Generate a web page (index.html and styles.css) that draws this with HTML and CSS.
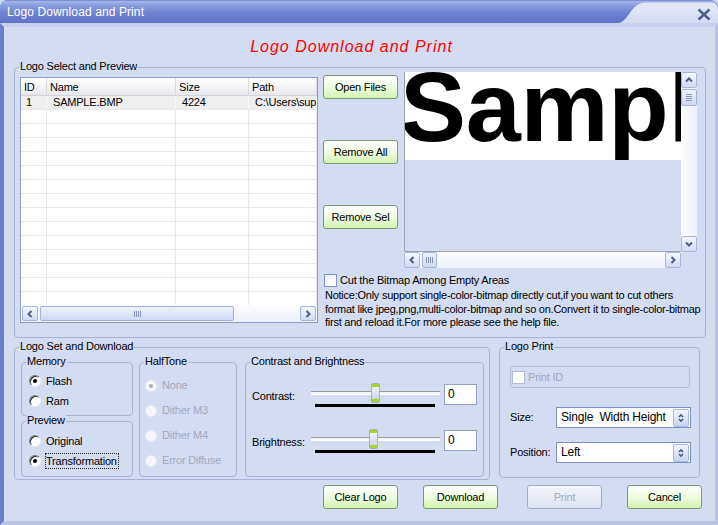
FILE: index.html
```html
<!doctype html>
<html lang="en">
<head>
    <meta charset="UTF-8">
    <title>Logo Download and Print</title>
    <link rel="stylesheet" href="styles.css">
</head>
<body>
<div class="window">
    <div class="titlebar">
        <span class="title-text">Logo Download and Print</span>
        <div class="title-cap">
            <svg class="cap-shape" viewBox="0 0 100 23" preserveAspectRatio="none">
                <defs>
                    <linearGradient id="capfill" x1="0" y1="0" x2="0" y2="1">
                        <stop offset="0" stop-color="#e6eaf9"/>
                        <stop offset="1" stop-color="#d3daf2"/>
                    </linearGradient>
                </defs>
                <path d="M0 23 C10 23 13 2.5 27 2.5 L93 2.5 Q100 2.5 100 10 L100 23 Z" fill="url(#capfill)"/>
            </svg>
            <svg class="close" viewBox="0 0 14 13"><path d="M1.5 1.5 L12.5 11.5 M12.5 1.5 L1.5 11.5"/></svg>
        </div>
    </div>

    <div class="frame">
        <h1 class="heading">Logo Download and Print</h1>

        <div class="group group-select">
            <span class="group-label">Logo Select and Preview</span>

            <div class="list">
                <div class="list-head">
                    <span>ID</span><span>Name</span><span>Size</span><span>Path</span>
                </div>
                <div class="list-body">
                    <div class="row sel"><span>1</span><span>SAMPLE.BMP</span><span>4224</span><span>C:\Users\sup</span></div>
                    <div class="row"><span></span><span></span><span></span><span></span></div>
                    <div class="row"><span></span><span></span><span></span><span></span></div>
                    <div class="row"><span></span><span></span><span></span><span></span></div>
                    <div class="row"><span></span><span></span><span></span><span></span></div>
                    <div class="row"><span></span><span></span><span></span><span></span></div>
                    <div class="row"><span></span><span></span><span></span><span></span></div>
                    <div class="row"><span></span><span></span><span></span><span></span></div>
                    <div class="row"><span></span><span></span><span></span><span></span></div>
                    <div class="row"><span></span><span></span><span></span><span></span></div>
                    <div class="row"><span></span><span></span><span></span><span></span></div>
                    <div class="row"><span></span><span></span><span></span><span></span></div>
                    <div class="row"><span></span><span></span><span></span><span></span></div>
                    <div class="row"><span></span><span></span><span></span><span></span></div>
                    <div class="row"><span></span><span></span><span></span><span></span></div>
                </div>
                <div class="hscroll list-scroll">
                    <span class="sb-btn"><svg viewBox="0 0 8 8"><path d="M5.5 1 L2.5 4 L5.5 7"/></svg></span>
                    <span class="sb-thumb list-thumb"><svg class="grip" viewBox="0 0 7 6"><path d="M0.5 0V6M2.5 0V6M4.5 0V6M6.5 0V6"/></svg></span>
                    <span class="sb-track"></span>
                    <span class="sb-btn"><svg viewBox="0 0 8 8"><path d="M2.5 1 L5.5 4 L2.5 7"/></svg></span>
                </div>
            </div>

            <div class="side-btns">
                <button class="btn">Open Files</button>
                <button class="btn">Remove All</button>
                <button class="btn">Remove Sel</button>
            </div>

            <div class="preview">
                <div class="canvas">
                    <div class="canvas-img"><span>Sampl</span></div>
                </div>
                <div class="vscroll">
                    <span class="sb-btn"><svg viewBox="0 0 8 8"><path d="M1 5.5 L4 2.5 L7 5.5"/></svg></span>
                    <span class="sb-thumb v-thumb"><svg class="grip" viewBox="0 0 6 7"><path d="M0 0.5H6M0 2.5H6M0 4.5H6M0 6.5H6"/></svg></span>
                    <span class="sb-track"></span>
                    <span class="sb-btn"><svg viewBox="0 0 8 8"><path d="M1 2.5 L4 5.5 L7 2.5"/></svg></span>
                </div>
                <div class="hscroll preview-scroll">
                    <span class="sb-btn"><svg viewBox="0 0 8 8"><path d="M5.5 1 L2.5 4 L5.5 7"/></svg></span>
                    <span class="sb-thumb small-thumb"><svg class="grip" viewBox="0 0 7 6"><path d="M0.5 0V6M2.5 0V6M4.5 0V6M6.5 0V6"/></svg></span>
                    <span class="sb-track"></span>
                    <span class="sb-btn"><svg viewBox="0 0 8 8"><path d="M2.5 1 L5.5 4 L2.5 7"/></svg></span>
                </div>
            </div>

            <div class="cut">
                <label class="check-row"><span class="checkbox"></span>Cut the Bitmap Among Empty Areas</label>
                <p class="notice">Notice:Only support single-color-bitmap directly cut,if you want to cut others<br>format like jpeg,png,multi-color-bitmap and so on.Convert it to single-color-bitmap<br>first and reload it.For more please see the help file.</p>
            </div>
        </div>

        <div class="lower">
            <div class="group group-set">
                <span class="group-label">Logo Set and Download</span>

                <div class="set-col">
                    <div class="group group-memory">
                        <span class="group-label">Memory</span>
                        <label class="opt"><span class="radio on"></span>Flash</label>
                        <label class="opt"><span class="radio"></span>Ram</label>
                    </div>
                    <div class="group group-preview">
                        <span class="group-label">Preview</span>
                        <label class="opt"><span class="radio"></span>Original</label>
                        <label class="opt"><span class="radio on"></span><span class="focus">Transformation</span></label>
                    </div>
                </div>

                <div class="group group-halftone">
                    <span class="group-label">HalfTone</span>
                    <label class="opt"><span class="radio off on"></span>None</label>
                    <label class="opt"><span class="radio off"></span>Dither M3</label>
                    <label class="opt"><span class="radio off"></span>Dither M4</label>
                    <label class="opt"><span class="radio off"></span>Error Diffuse</label>
                </div>

                <div class="group group-cb">
                    <span class="group-label">Contrast and Brightness</span>
                    <div class="cb-row">
                        <span class="cb-label">Contrast:</span>
                        <div class="slider">
                            <div class="track"></div>
                            <div class="ticks"></div>
                            <span class="thumb"></span>
                        </div>
                        <span class="num-input">0</span>
                    </div>
                    <div class="cb-row">
                        <span class="cb-label">Brightness:</span>
                        <div class="slider">
                            <div class="track"></div>
                            <div class="ticks"></div>
                            <span class="thumb thumb-b"></span>
                        </div>
                        <span class="num-input">0</span>
                    </div>
                </div>
            </div>

            <div class="group group-print">
                <span class="group-label">Logo Print</span>
                <label class="print-id"><span class="checkbox off"></span>Print ID</label>
                <div class="field field-size">
                    <span class="field-label">Size:</span>
                    <div class="select"><span class="select-text">Single  Width Height</span><span class="drop"><svg viewBox="0 0 8 10"><path d="M2 4 L4 2 L6 4 M2 6 L4 8 L6 6"/></svg></span></div>
                </div>
                <div class="field field-pos">
                    <span class="field-label">Position:</span>
                    <div class="select"><span class="select-text">Left</span><span class="drop"><svg viewBox="0 0 8 10"><path d="M2 4 L4 2 L6 4 M2 6 L4 8 L6 6"/></svg></span></div>
                </div>
            </div>
        </div>

        <div class="actions">
            <button class="btn">Clear Logo</button>
            <button class="btn btn-download">Download</button>
            <button class="btn disabled">Print</button>
            <button class="btn">Cancel</button>
        </div>
    </div>
</div>
</body>
</html>
```

FILE: styles.css
```css
* { margin: 0; padding: 0; box-sizing: border-box; }
html, body { width: 100%; height: 100%; }
body {
    font: 11px/13px "Liberation Sans", Arial, sans-serif;
    letter-spacing: -0.2px;
    color: #000;
    background: #d4dcf2;
}

/* window chrome */
.window { width: 718px; height: 525px; display: flex; flex-direction: column; background: #6b7ec8; border-radius: 8px 8px 0 0; overflow: hidden; }
.titlebar {
    height: 23px; display: flex;
    background: linear-gradient(#5668bd 0, #a6b5ea 1px, #8c9fdf 5px, #7185d2 12px, #5e72c5 23px);
}
.title-text { flex: 1; padding: 5px 0 0 7px; color: #fff; font-size: 12px; line-height: 14px; letter-spacing: 0.1px; }
.title-cap { width: 100px; position: relative; display: flex; justify-content: flex-end; align-items: flex-start; }
.cap-shape { position: absolute; left: 0; top: 0; width: 100%; height: 100%; }
.close { position: relative; width: 14px; height: 13px; margin: 8px 7px 0 0; fill: none; stroke: #4c5a86; stroke-width: 2.4; }

.frame {
    flex: 1;
    background: #d4dcf2;
    border-left: 4px solid #6b7ec8;
    border-right: 3px solid #b9c4e7;
    border-bottom: 4px solid #b9c4e7;
    border-top: 4px solid #c8d0ee;
    padding: 0 9px 0 10px;
}

.heading {
    height: 40px; padding: 10px 17px 0 0;
    font: italic 16px/20px "Liberation Sans", Arial, sans-serif;
    letter-spacing: 1px; color: #ff0000; text-align: center;
}

/* group boxes */
.group { position: relative; border: 1px solid #a9b3d3; border-radius: 4px; }
.group-label { position: absolute; top: -8px; left: 4px; padding: 0 1px; background: #d4dcf2; line-height: 13px; white-space: nowrap; }

.group-select {
    height: 271px;
    display: grid;
    grid-template-columns: 298px 76px 293px;
    grid-template-rows: 196px auto;
    column-gap: 5px; row-gap: 5px;
    padding: 4px 8px 0 5px;
}

/* list view */
.list {
    grid-row: 1 / 3; align-self: start;
    margin-top: 5px; height: 246px;
    border: 1px solid #8d9cc8; background: #fff;
    display: flex; flex-direction: column;
}
.list-head {
    height: 18px; flex: none;
    display: grid; grid-template-columns: 26px 129px 73px 1fr;
    background: linear-gradient(#fefefe, #f3f3f6 60%, #e6e6ec);
    border-bottom: 1px solid #d4d4dc;
}
.list-head span { padding: 3px 0 0 3px; border-right: 1px solid #d8d8de; white-space: nowrap; overflow: hidden; }
.list-body { flex: 1; overflow: hidden; }
.row { display: grid; grid-template-columns: 26px 129px 73px 1fr; height: 14px; border-bottom: 1px solid #e8e8e8; }
.row span { padding-left: 5px; line-height: 13px; border-right: 1px solid #e8e8e8; white-space: nowrap; overflow: hidden; }
.row span + span { padding-left: 6px; }
.row.sel { background: #efefef; }
.row.sel span { border-right-color: #f8f8f8; }

/* scrollbars */
.hscroll { display: flex; align-items: center; gap: 1px; background: linear-gradient(#fdfdff, #edf0fa); }
.vscroll { display: flex; flex-direction: column; align-items: center; gap: 1px; background: linear-gradient(to right, #fdfdff, #edf0fa); }
.sb-btn {
    width: 16px; height: 16px; flex: none;
    display: flex; align-items: center; justify-content: center;
    border: 1px solid #a7b5df; border-radius: 2px;
    background: linear-gradient(#f6f8fe, #d2dbf4);
}
.sb-btn svg { width: 8px; height: 8px; fill: none; stroke: #4a5e86; stroke-width: 2; }
.sb-track { flex: 1; }
.sb-thumb {
    flex: none; height: 16px;
    display: flex; align-items: center; justify-content: center;
    border: 1px solid #a3b2de; border-radius: 2px;
    background: linear-gradient(#eef2fc, #cfd9f3);
}
.grip { width: 7px; height: 6px; fill: none; stroke: #8696c0; stroke-width: 1; }
.list-scroll { height: 17px; padding: 0 1px; flex: none; }
.list-scroll .sb-btn { height: 15px; }
.list-thumb { width: 194px; height: 15px; margin-left: 1px; }
.preview-scroll { grid-column: 1; height: 16px; }
.small-thumb { width: 15px; margin-left: 1px; }
.v-thumb { width: 16px; height: 17px; }
.v-thumb .grip { width: 6px; height: 7px; }

/* side buttons */
.side-btns { display: flex; flex-direction: column; gap: 41px; padding-top: 3px; }
.btn {
    width: 75px; height: 24px;
    font: 11px "Liberation Sans", Arial, sans-serif; letter-spacing: -0.2px; color: #000;
    border: 1px solid #7c9974; border-radius: 3px;
    background: linear-gradient(#ffffff, #eefce1 50%, #d4f4b2);
}
.btn.disabled { color: #a4aabc; border-color: #a3adc7; background: linear-gradient(#f4f6fc, #dde3f3); }

/* preview */
.preview { display: grid; grid-template-columns: 277px 16px; grid-template-rows: 180px 16px; }
.canvas { background: #d4dcf2; border-left: 1px solid #9ea3b4; border-bottom: 1px solid #9ea3b4; overflow: hidden; }
.canvas-img { height: 88px; margin-left: -1px; background: #fff; overflow: hidden; }
.canvas-img span {
    display: block; margin: -15px 0 0 -4px;
    font: bold 99px/99px "Liberation Sans", Arial, sans-serif; letter-spacing: -0.3px;
    white-space: nowrap;
}

.cut { grid-column: 2 / 4; padding-left: 1px; }
.check-row { display: flex; align-items: center; gap: 3px; height: 14px; }
.checkbox { width: 13px; height: 13px; flex: none; border: 1px solid #8193c6; background: linear-gradient(135deg, #f0f2f8, #fff); }
.checkbox.off { border-color: #b3bcd9; background: #fff; }
.notice { margin-top: 2px; padding-left: 1px; line-height: 13.5px; white-space: nowrap; letter-spacing: -0.25px; }

/* lower groups */
.lower { display: flex; align-items: flex-start; margin-top: 9px; }
.group-set { width: 476px; height: 133px; display: flex; padding: 14px 5px 2px 6px; }
.set-col { width: 112px; display: flex; flex-direction: column; gap: 5px; }
.group-memory { height: 54px; padding: 8px 0 0 7px; }
.group-preview { height: 56px; padding: 9px 0 0 7px; }
.group-halftone { width: 98px; margin-left: 6px; padding: 10px 0 0 5px; }
.group-cb { width: 239px; margin-left: 8px; padding: 20px 0 0 6px; }

.opt { display: flex; align-items: center; gap: 5px; height: 20px; white-space: nowrap; }
.group-halftone .opt { height: 25px; color: #a3a9bb; }
.radio {
    position: relative; width: 12px; height: 12px; flex: none; border-radius: 50%;
    background: #fff;
    border: 1px solid; border-color: #7a7a7a #f2f2f2 #f2f2f2 #7a7a7a;
    box-shadow: inset 1px 1px 0 #303030;
}
.radio.on::after { content: ""; position: absolute; left: 3px; top: 3px; width: 4px; height: 4px; border-radius: 50%; background: #000; }
.radio.off { border-color: #e6e9f2; background: #f6f7fa; box-shadow: none; }
.radio.off.on::after { background: #a9adb9; }
.focus { border: 1px dotted #222; margin-left: -1px; padding-right: 1px; line-height: 14px; }

.cb-row { display: flex; height: 46px; }
.cb-label { width: 59px; padding-top: 7px; white-space: nowrap; }
.slider { position: relative; width: 129px; height: 25px; }
.track { margin-top: 8px; height: 4px; border-top: 1px solid #9a9a9a; border-bottom: 1px solid #fff; background: #f4f4f4; }
.ticks { margin: 9px 0 0 4px; width: 120px; height: 3px; background: #000; }
.thumb {
    position: absolute; left: 60px; top: 0; width: 9px; height: 20px;
    border: 1px solid #9eb0cf; border-radius: 2px;
    background: linear-gradient(#a7d62c 0, #a7d62c 3px, #eef2fc 3px, #cdd7f1 15px, #a7d62c 15px);
}
.thumb-b { left: 58px; }
.num-input { margin: 1px 0 0 4px; width: 33px; height: 21px; border: 1px solid #93a1c8; background: #fff; padding: 3px 0 0 3px; font-size: 12px; }

.group-print { width: 201px; height: 131px; margin-left: 9px; padding: 18px 0 0 10px; }
.print-id {
    display: flex; align-items: center; gap: 3px;
    width: 180px; height: 22px; padding-left: 1px;
    border: 1px solid #b5bdd9; border-radius: 3px; color: #a3a9bb;
}
.field { display: flex; align-items: center; height: 21px; }
.field-size { margin-top: 19px; }
.field-pos { margin-top: 14px; }
.field-label { width: 46px; white-space: nowrap; }
.select {
    width: 135px; height: 21px;
    display: flex; align-items: center; justify-content: space-between;
    padding: 0 1px 0 4px;
    border: 1px solid #7d8fcb; background: #fff;
}
.select-text { white-space: pre; font-size: 12px; letter-spacing: -0.2px; }
.drop {
    width: 16px; height: 18px;
    display: flex; align-items: center; justify-content: center;
    border: 1px solid #aab7df; border-radius: 2px;
    background: linear-gradient(#f3f6fd, #c9d4f1);
}
.drop svg { width: 8px; height: 10px; fill: none; stroke: #4a5a84; stroke-width: 1.6; }

.actions { display: flex; justify-content: flex-end; gap: 25px; margin-top: 5px; padding-right: 4px; }
.btn-download { margin-right: 4px; }
```
